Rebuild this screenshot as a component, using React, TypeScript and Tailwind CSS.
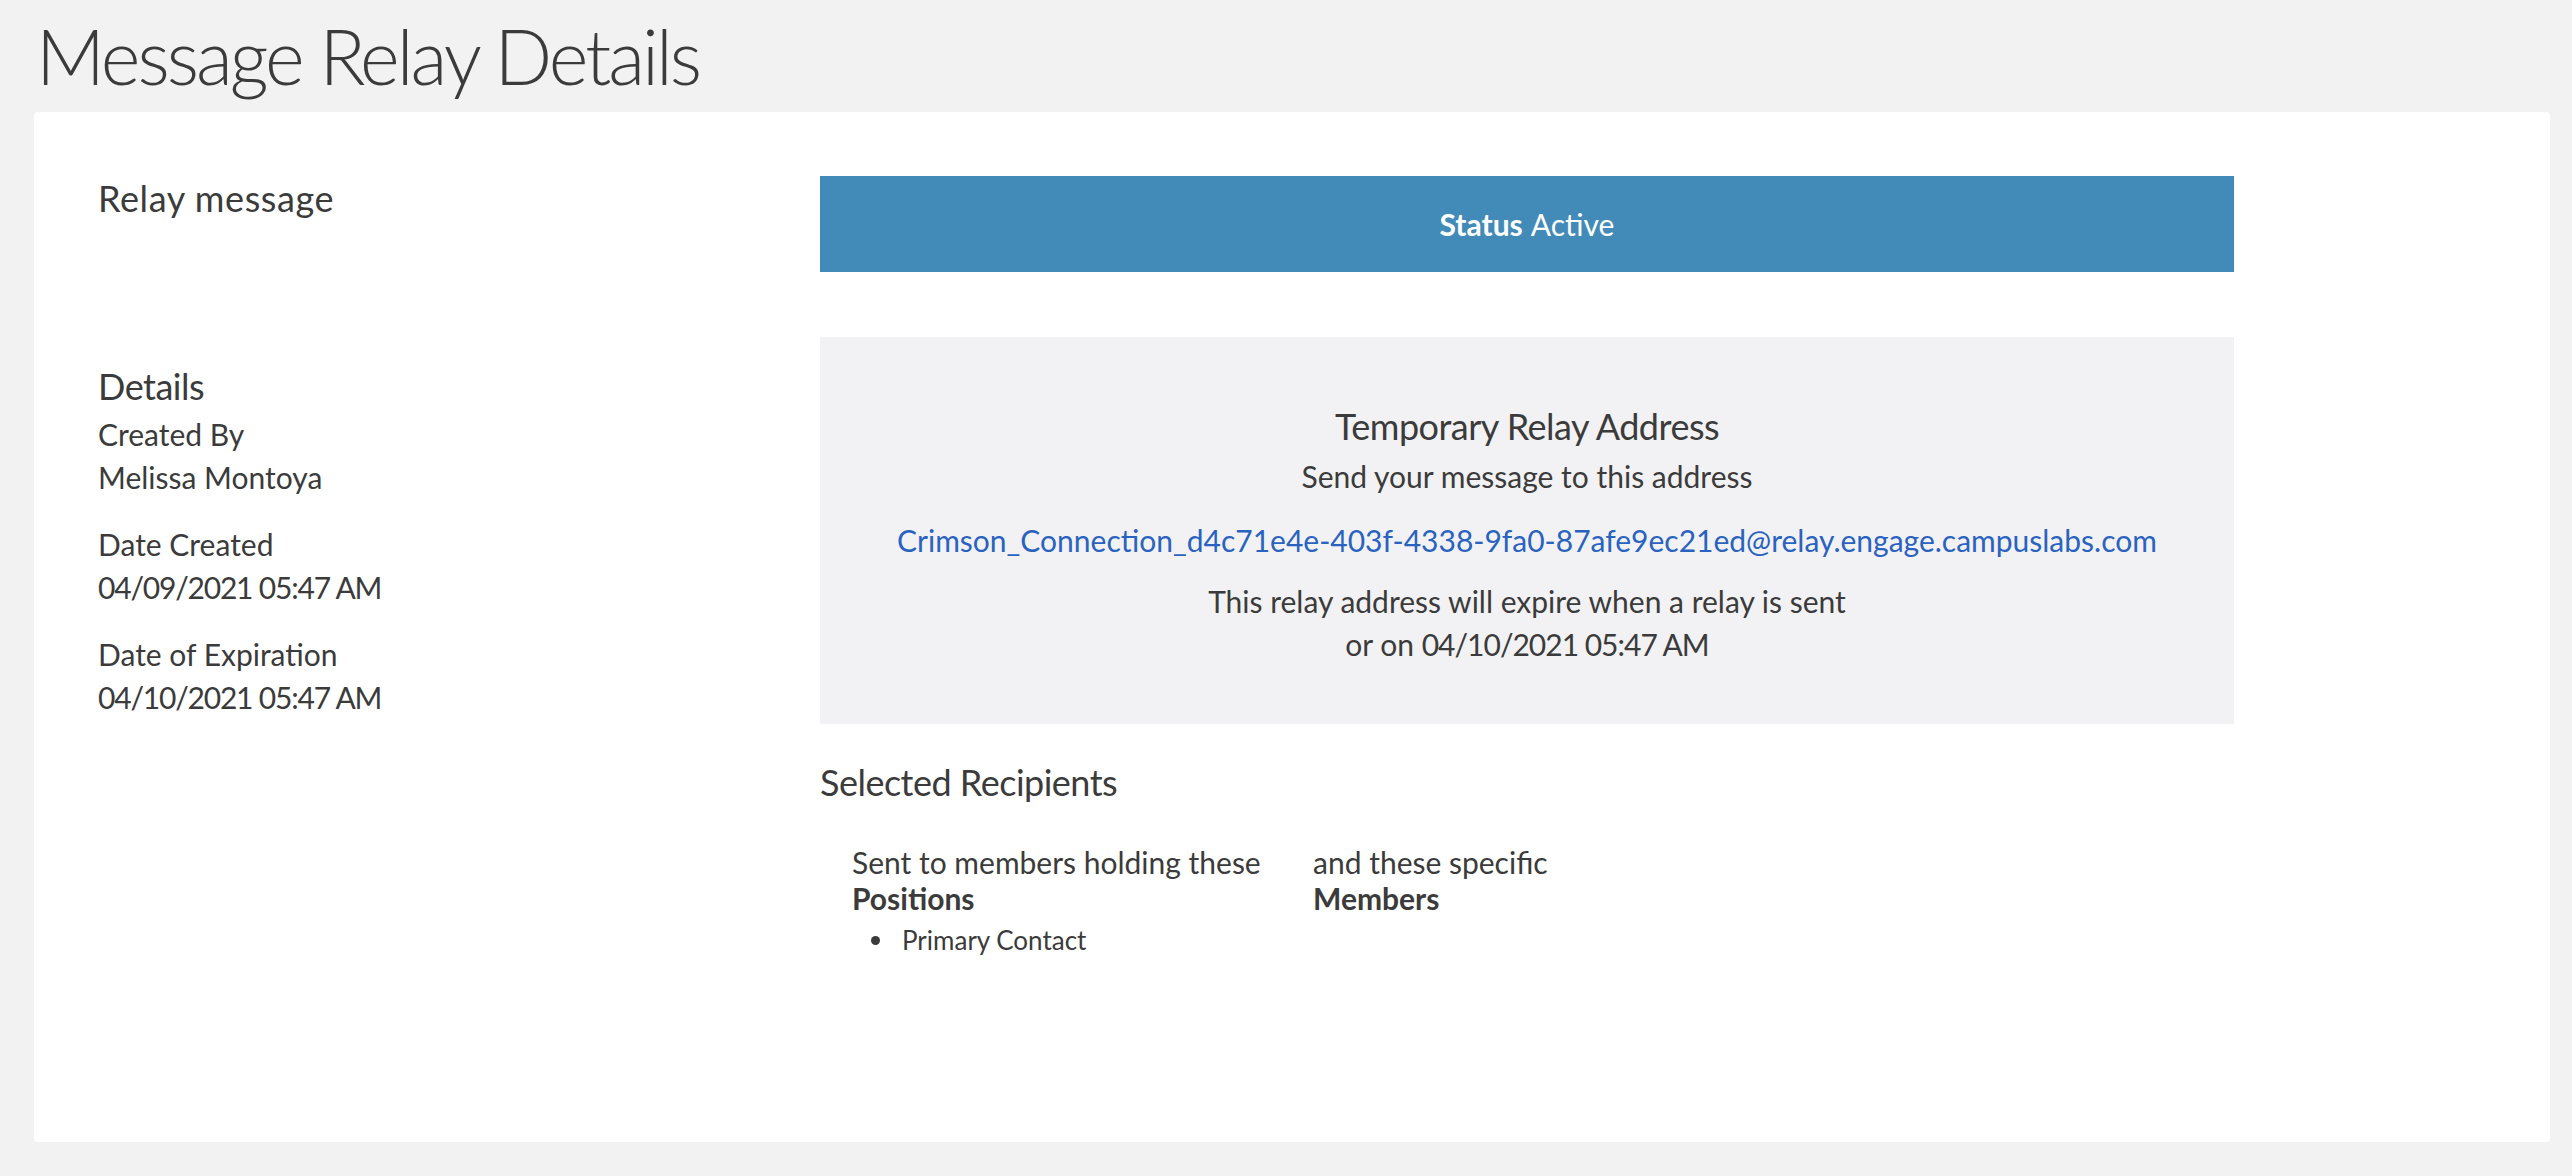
import React from "react";

const font = { fontFamily: '"Lato", "Liberation Sans", sans-serif' };

export default function App() {
  return (
    <div className="min-h-[1176px] w-[2572px] bg-[#f2f2f2] text-[#3b3b3b]" style={font}>
      <div className="pl-[36px] pt-[18px]">
        <h1 className="text-[76px] leading-[76px] font-light tracking-[-3px] text-[#3b3b3b]">Message Relay Details</h1>
      </div>
      <div className="mt-[18px] ml-[34px] w-[2516px] h-[1030px] rounded-[4px] bg-white pt-[64px] pl-[64px] flex">
        {/* left column */}
        <div className="w-[722px] flex flex-col">
          <h2 className="text-[36px] leading-[44px] tracking-[0.6px]">Relay message</h2>
          <h3 className="mt-[144px] text-[36px] leading-[44px] tracking-[-0.5px]">Details</h3>
          <div className="mt-[5px] text-[30px] leading-[43px]">
            <div>Created By</div>
            <div>Melissa Montoya</div>
            <div className="mt-[24px]">Date Created</div>
            <div className="tracking-[-1.2px]">04/09/2021 05:47 AM</div>
            <div className="mt-[24px]">Date of Expiration</div>
            <div className="tracking-[-1.2px]">04/10/2021 05:47 AM</div>
          </div>
        </div>
        {/* right column */}
        <div className="w-[1414px] flex flex-col">
          <div className="h-[96px] bg-[#428bb9] flex items-center justify-center text-white text-[30px]">
            <span className="font-bold">Status</span>
            <span className="ml-[8px]">Active</span>
          </div>
          <div className="mt-[65px] h-[387px] bg-[#f2f2f4] pt-[67px] flex flex-col items-center text-center">
            <div className="text-[36px] leading-[44px] tracking-[-0.5px]">Temporary Relay Address</div>
            <div className="mt-[7px] text-[30px] leading-[43px]">Send your message to this address</div>
            <a className="mt-[21px] text-[30px] leading-[43px] text-[#2a62c0]" href="#">
              Crimson_Connection_d4c71e4e-403f-4338-9fa0-87afe9ec21ed@relay.engage.campuslabs.com
            </a>
            <div className="mt-[18px] text-[30px] leading-[43px]">
              <div>This relay address will expire when a relay is sent</div>
              <div>or on <span className="tracking-[-1px]">04/10/2021 05:47 AM</span></div>
            </div>
          </div>
          <h3 className="mt-[36px] text-[36px] leading-[44px] tracking-[-0.5px]">Selected Recipients</h3>
          <div className="mt-[40px] pl-[32px] flex">
            <div className="w-[461px]">
              <div className="text-[30px] leading-[36px]">Sent to members holding these</div>
              <div className="text-[30px] leading-[36px] font-bold">Positions</div>
              <ul className="mt-[6px] text-[26px] leading-[36px]">
                <li className="flex items-center">
                  <span className="ml-[19px] mr-[22px] w-[9px] h-[9px] rounded-full bg-[#3b3b3b]"></span>
                  <span>Primary Contact</span>
                </li>
              </ul>
            </div>
            <div>
              <div className="text-[30px] leading-[36px]">and these specific</div>
              <div className="text-[30px] leading-[36px] font-bold">Members</div>
            </div>
          </div>
        </div>
      </div>
    </div>
  );
}
